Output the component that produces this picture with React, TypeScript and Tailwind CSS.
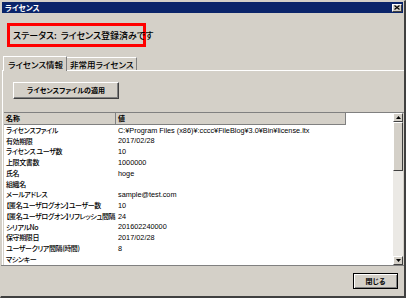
import React from "react";

const rows: [string, string][] = [
  ["ライセンスファイル", "C:¥Program Files (x86)¥:cccc¥FileBlog¥3.0¥Bin¥license.ltx"],
  ["有効期限", "2017/02/28"],
  ["ライセンス ユーザ数", "10"],
  ["上限文書数", "1000000"],
  ["氏名", "hoge"],
  ["組織名", ""],
  ["メールアドレス", "sample@test.com"],
  ["【匿名ユーザログオン】ユーザー数", "10"],
  ["【匿名ユーザログオン】リフレッシュ間隔", "24"],
  ["シリアルNo", "201602240000"],
  ["保守期限日", "2017/02/28"],
  ["ユーザークリア間隔(時間)", "8"],
  ["マシンキー", ""],
];

const jp = "font-['Noto_Sans_CJK_JP',sans-serif] [font-feature-settings:'palt']";
const lat = "font-['Liberation_Sans','Noto_Sans_CJK_JP',sans-serif]";

export default function App() {
  return (
    <div className="w-[406px] h-[298px] bg-[#d4d0c8] border-t border-l border-t-[#d4d0c8] border-l-[#d4d0c8] border-r-[2px] border-b-[2px] border-r-[#404040] border-b-[#404040] flex flex-col overflow-hidden">
      {/* title bar */}
      <div className="mt-[1px] ml-[1px] mr-[1px] h-[11px] bg-[#0a246a] flex items-center justify-between pl-[3px] pr-[1px]">
        <span className={`${jp} text-white font-bold text-[7.5px] leading-none`}>ライセンス</span>
        <div className="w-[10px] h-[8px] bg-[#d4d0c8] border border-t-white border-l-white border-r-[#404040] border-b-[#404040] flex items-center justify-center">
          <svg width="6" height="5" viewBox="0 0 6 5">
            <path d="M0.5 0.5 L5.5 4.5 M5.5 0.5 L0.5 4.5" stroke="#000" strokeWidth="1.2" />
          </svg>
        </div>
      </div>

      {/* status box */}
      <div className="mt-[10px] ml-[6px] w-[139px] h-[24px] border-[3px] border-[#ff0000] flex items-center pl-[3px]">
        <span className={`${jp} text-[9px] leading-none font-medium text-black whitespace-nowrap`}>ステータス:&nbsp;&nbsp;ライセンス登録済みです</span>
      </div>

      {/* tabs */}
      <div className="mt-[8px] flex items-end pl-[2px] h-[15px]">
        <div className="h-[15px] w-[64px] bg-[#d4d0c8] border-t border-l border-r border-t-white border-l-white border-r-[#808080] flex items-center pl-[4px] relative z-10 -mb-[1px]">
          <span className={`${jp} text-[8.5px] leading-none font-medium text-black whitespace-nowrap`}>ライセンス情報</span>
        </div>
        <div className="h-[13px] w-[70px] bg-[#d4d0c8] border-t border-r border-t-white border-r-[#808080] flex items-center pl-[3px]">
          <span className={`${jp} text-[8.5px] leading-none font-medium text-black whitespace-nowrap`}>非常用ライセンス</span>
        </div>
      </div>

      {/* tab panel */}
      <div className="ml-[1px] border-t border-l border-t-white border-l-white flex flex-col">
        <div className="pt-[11px] pl-[10px]">
          <div className="w-[106px] h-[17px] bg-[#d4d0c8] border border-t-white border-l-white border-r-[#404040] border-b-[#404040] shadow-[inset_-1px_-1px_0_#808080] flex items-center justify-center">
            <span className={`${jp} text-[7px] leading-none text-black font-bold whitespace-nowrap`}>ライセンスファイルの適用</span>
          </div>
        </div>

        {/* list */}
        <div className="mt-[13px] ml-[1px] h-[153px] flex bg-white border-t border-t-[#808080]">
          <div className="flex-1 flex flex-col">
            <div className="flex h-[12px]">
              <div className="w-[112px] h-[12px] bg-[#d4d0c8] border-r border-b border-r-[#808080] border-b-[#808080] flex items-center pl-[2px]">
                <span className={`${jp} text-[7px] leading-none font-bold text-black`}>名称</span>
              </div>
              <div className="w-[230px] h-[12px] bg-[#d4d0c8] border-r border-b border-r-[#808080] border-b-[#808080] flex items-center pl-[2px]">
                <span className={`${jp} text-[7px] leading-none font-bold text-black`}>値</span>
              </div>
            </div>
            {rows.map(([n, v], i) => (
              <div key={i} className="flex h-[10.75px] items-center">
                <div className={`w-[112px] shrink-0 pl-[2px] ${jp} text-[7px] leading-none font-medium tracking-[-0.4px] text-black whitespace-nowrap`}>{n}</div>
                <div className={`pl-[2px] ${lat} text-[7.3px] leading-none text-black whitespace-nowrap`}>{v}</div>
              </div>
            ))}
          </div>
          {/* scrollbar */}
          <div className="w-[10px] bg-[#ebe9e5] flex flex-col">
            <div className="h-[9px] bg-[#d4d0c8] border border-t-white border-l-white border-r-[#404040] border-b-[#404040] flex items-center justify-center">
              <svg width="5" height="3" viewBox="0 0 5 3"><path d="M2.5 0 L5 3 L0 3 Z" fill="#000" /></svg>
            </div>
            <div className="h-[49px] bg-[#d4d0c8] border border-t-white border-l-white border-r-[#404040] border-b-[#404040]" />
            <div className="flex-1" />
            <div className="h-[9px] bg-[#d4d0c8] border border-t-white border-l-white border-r-[#404040] border-b-[#404040] flex items-center justify-center">
              <svg width="5" height="3" viewBox="0 0 5 3"><path d="M0 0 L5 0 L2.5 3 Z" fill="#000" /></svg>
            </div>
          </div>
          <div className="w-[1px] bg-[#d4d0c8]" />
        </div>
      </div>

      {/* bottom */}
      <div className="flex-1 flex justify-end items-start pt-[7px] pr-[6px] border-t border-t-[#808080]">
        <div className="w-[45px] h-[16px] border border-[#000] bg-[#d4d0c8] shadow-[inset_1px_1px_0_#ffffff,inset_-1px_-1px_0_#808080] flex items-center justify-center">
          <span className={`${jp} text-[7px] leading-none font-bold text-black`}>閉じる</span>
        </div>
      </div>
    </div>
  );
}
